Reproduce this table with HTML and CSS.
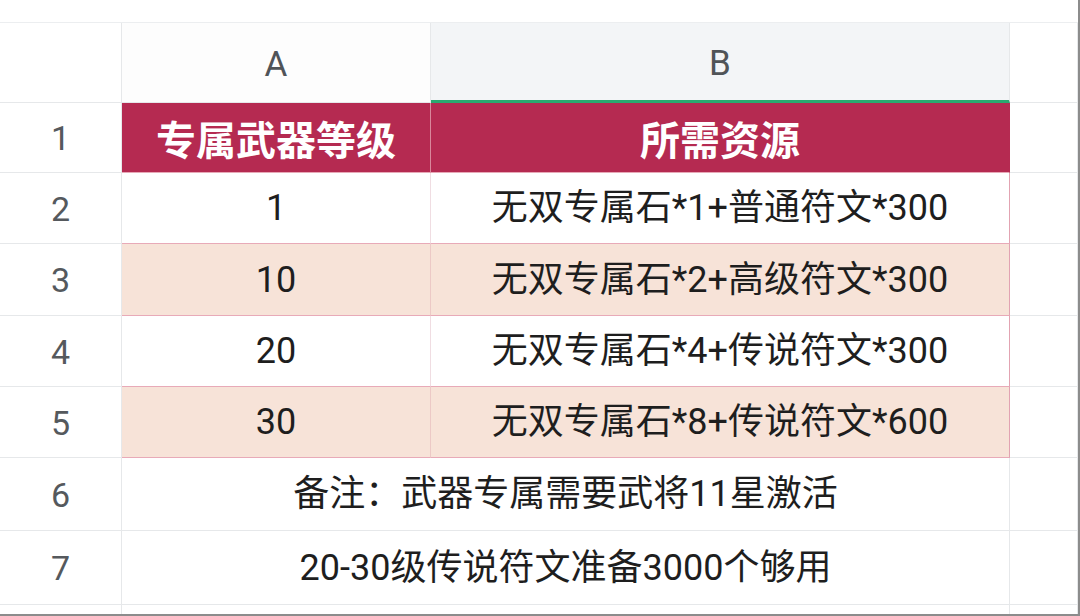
FILE: index.html
```html
<!DOCTYPE html>
<html lang="zh-CN">
<head>
<meta charset="utf-8">
<title>专属武器等级</title>
<link rel="stylesheet" href="styles.css">
</head>
<body>
<div class="frame">
  <table class="sheet">
    <colgroup>
      <col class="c-rh">
      <col class="c-a">
      <col class="c-b">
      <col class="c-c">
    </colgroup>
    <tr class="r-colhead">
      <th class="corner"></th>
      <th class="colhead">A</th>
      <th class="colhead selected">B</th>
      <th class="colhead blank"></th>
    </tr>
    <tr class="r1">
      <th class="rowhead">1</th>
      <td class="title first">专属武器等级</td>
      <td class="title">所需资源</td>
      <td class="empty"></td>
    </tr>
    <tr class="r2">
      <th class="rowhead">2</th>
      <td class="data first">1</td>
      <td class="data">无双专属石*1+普通符文*300</td>
      <td class="empty"></td>
    </tr>
    <tr class="r3 alt">
      <th class="rowhead">3</th>
      <td class="data first">10</td>
      <td class="data">无双专属石*2+高级符文*300</td>
      <td class="empty"></td>
    </tr>
    <tr class="r4">
      <th class="rowhead">4</th>
      <td class="data first">20</td>
      <td class="data">无双专属石*4+传说符文*300</td>
      <td class="empty"></td>
    </tr>
    <tr class="r5 alt">
      <th class="rowhead">5</th>
      <td class="data first">30</td>
      <td class="data">无双专属石*8+传说符文*600</td>
      <td class="empty"></td>
    </tr>
    <tr class="r6">
      <th class="rowhead">6</th>
      <td class="note" colspan="2">备注：武器专属需要武将11星激活</td>
      <td class="empty"></td>
    </tr>
    <tr class="r7">
      <th class="rowhead">7</th>
      <td class="note" colspan="2">20-30级传说符文准备3000个够用</td>
      <td class="empty"></td>
    </tr>
    <tr class="r8">
      <th class="rowhead">8</th>
      <td class="note" colspan="2"></td>
      <td class="empty"></td>
    </tr>
  </table>
</div>
</body>
</html>
```

FILE: styles.css
```css
html, body {
  margin: 0;
  padding: 0;
  background: #ffffff;
}

.frame {
  width: 1080px;
  height: 616px;
  box-sizing: border-box;
  padding-top: 22px;
  border-right: 2px solid #8c8c8c;
  border-bottom: 2px solid #8c8c8c;
  overflow: hidden;
  background: #ffffff;
  font-family: Roboto, "Noto Sans CJK SC", sans-serif;
}

.sheet {
  border-collapse: separate;
  border-spacing: 0;
  table-layout: fixed;
  width: 1078px;
  border-top: 1px solid #eceef0;
}

.c-rh { width: 122px; }
.c-a { width: 309px; }
.c-b { width: 579px; }
.c-c { width: 68px; }

th, td {
  padding: 0;
  line-height: 1.1;
  text-align: center;
  vertical-align: middle;
  border-right: 1px solid #e6e8ea;
  border-bottom: 1px solid #e6e8ea;
  overflow: hidden;
  white-space: nowrap;
}

.r-colhead { height: 80px; }
.r1 { height: 70px; }
.r2 { height: 71px; }
.r3 { height: 72px; }
.r4 { height: 71px; }
.r5 { height: 71px; }
.r6 { height: 73px; }
.r7 { height: 74px; }
.r8 { height: 40px; }

.corner {
  background: #ffffff;
}

.colhead {
  font-weight: 400;
  font-size: 35px;
  color: #505458;
  background: #fdfdfd;
  padding-top: 6px;
}

.colhead.selected {
  background: #f3f5f7;
  border-bottom: 3px solid #2aa970;
}

.colhead.blank {
  background: #ffffff;
}

.rowhead {
  font-weight: 400;
  font-size: 34px;
  color: #55595d;
  background: #ffffff;
  padding-top: 3px;
}

.title {
  background: #b52a51;
  color: #ffffff;
  font-family: "Noto Sans CJK SC", sans-serif;
  font-weight: 700;
  font-size: 40px;
  border-right: 1px solid #b52a51;
  border-bottom: 1px solid #e7a9b7;
}

.title.first {
  border-right: 1px solid #d9879b;
}

.data {
  font-size: 36px;
  color: #1e1e1e;
  background: #ffffff;
  border-right: 1px solid #e2a3b2;
  border-bottom: 1px solid #e8aab8;
  padding-top: 2px;
}

.data.first {
  border-right: 1px solid #f0dde2;
}

.alt .data {
  background: #f7e3d8;
}

.alt .data.first {
  border-right: 1px solid #ecc9c6;
}

.note {
  font-size: 36px;
  color: #1e1e1e;
  background: #ffffff;
  padding-top: 2px;
}

.empty {
  background: #ffffff;
}
```
